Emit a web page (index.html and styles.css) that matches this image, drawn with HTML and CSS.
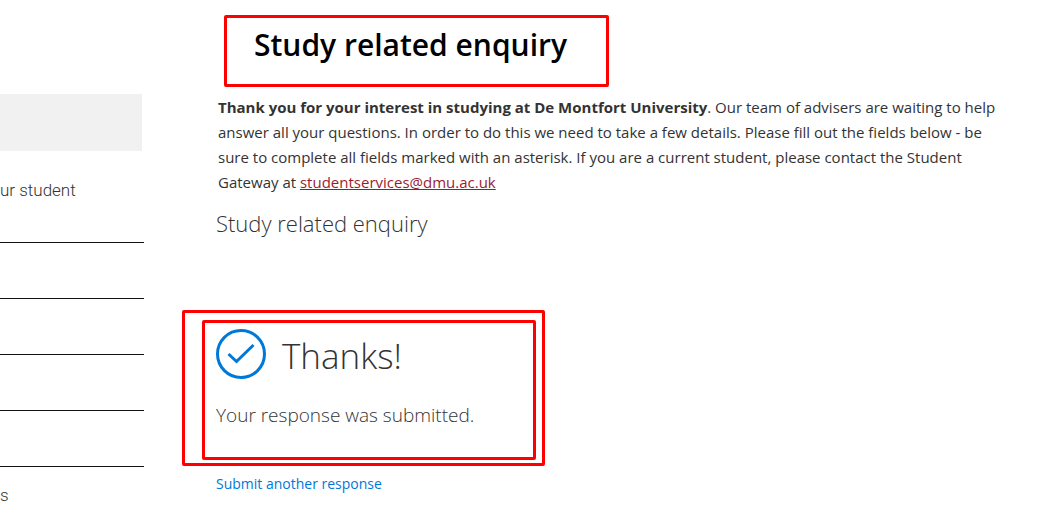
FILE: index.html
```
<!DOCTYPE html>
<html lang="en">
<head>
<meta charset="utf-8">
<meta name="viewport" content="width=device-width, initial-scale=1">
<title>Study related enquiry</title>
<link rel="stylesheet" href="styles.css">
</head>
<body>
<div class="page">
  <nav class="sidebar" aria-label="Section">
    <div class="side-current"></div>
    <ul class="side-list">
      <li class="side-item side-item-tall">ur student</li>
      <li class="side-item"></li>
      <li class="side-item"></li>
      <li class="side-item"></li>
      <li class="side-item"></li>
      <li class="side-item side-item-last">s</li>
    </ul>
  </nav>
  <main class="content">
    <h1 class="title">Study related enquiry</h1>
    <p class="intro"><strong>Thank you for your interest in studying at De Montfort University</strong>. Our team of advisers are waiting to help<br>
    answer all your questions. In order to do this we need to take a few details. Please fill out the fields below - be<br>
    sure to complete all fields marked with an asterisk. If you are a current student, please contact the Student<br>
    Gateway at <a class="mail" href="mailto:studentservices@dmu.ac.uk">studentservices@dmu.ac.uk</a></p>
    <h2 class="form-name">Study related enquiry</h2>
    <section class="result">
      <div class="result-inner">
        <div class="thanks">
          <svg class="tick" viewBox="0 0 50 50" aria-hidden="true">
            <circle cx="25" cy="25" r="23.5"/>
            <path d="M12.500 25 20.500 32.500 37.500 16"/>
          </svg>
          <h3 class="thanks-text">Thanks!</h3>
        </div>
        <p class="submitted">Your response was submitted.</p>
      </div>
    </section>
    <a class="again" href="#">Submit another response</a>
  </main>
</div>
</body>
</html>
```
FILE: styles.css
```
* {
  box-sizing: border-box;
}

body {
  margin: 0;
  background: #fff;
  color: #333;
  font-family: "Open Sans", "Noto Sans", sans-serif;
}

.page {
  display: flex;
  align-items: flex-start;
}

.sidebar {
  flex: 0 0 144px;
  padding-top: 94px;
  font-family: Roboto, sans-serif;
  font-weight: 300;
  font-size: 17px;
  line-height: 24px;
}

.side-current {
  height: 57px;
  margin-right: 2px;
  background: #f1f1f1;
}

.side-list {
  margin: 0;
  padding: 0;
  list-style: none;
}

.side-item {
  height: 56px;
  border-bottom: 1px solid #111;
}

.side-item-tall {
  height: 92px;
  padding-top: 27px;
}

.side-item-last {
  height: auto;
  padding-top: 16px;
  border-bottom: 0;
}

.content {
  flex: 1;
  display: flex;
  flex-direction: column;
  align-items: flex-start;
  padding: 15px 24px 16px 38px;
}

.title {
  margin: 0 0 0 42px;
  padding: 7px 39px 19px 27px;
  border: 3px solid #f00;
  border-radius: 2px;
  color: #000;
  font-size: 30px;
  font-weight: 600;
  line-height: 40px;
  white-space: nowrap;
}

.intro {
  margin: 8px 0 0 36px;
  font-size: 15px;
  line-height: 25px;
  white-space: nowrap;
}

.mail {
  color: #9b1c2e;
}

.form-name {
  margin: 12px 0 0 34px;
  font-size: 22px;
  font-weight: 300;
  line-height: 32px;
}

.result {
  padding: 7px 6px 3px 17px;
  margin-top: 71px;
  border: 3px solid #f00;
  border-radius: 2px;
}

.result-inner {
  min-width: 334px;
  padding: 6px 11px 28px;
  border: 3px solid #f00;
  border-radius: 2px;
}

.thanks {
  display: flex;
  align-items: center;
  gap: 16px;
}

.tick {
  width: 50px;
  height: 50px;
  fill: none;
  stroke: #0078d7;
  stroke-width: 3;
}

.thanks-text {
  margin: 0;
  padding-top: 4px;
  font-size: 35px;
  font-weight: 300;
  line-height: 46px;
}

.submitted {
  margin: 22px 0 0;
  font-size: 19px;
  font-weight: 300;
  line-height: 28px;
}

.again {
  margin: 6px 0 0 34px;
  color: #0078d7;
  font-size: 14px;
  line-height: 24px;
  text-decoration: none;
}
```
